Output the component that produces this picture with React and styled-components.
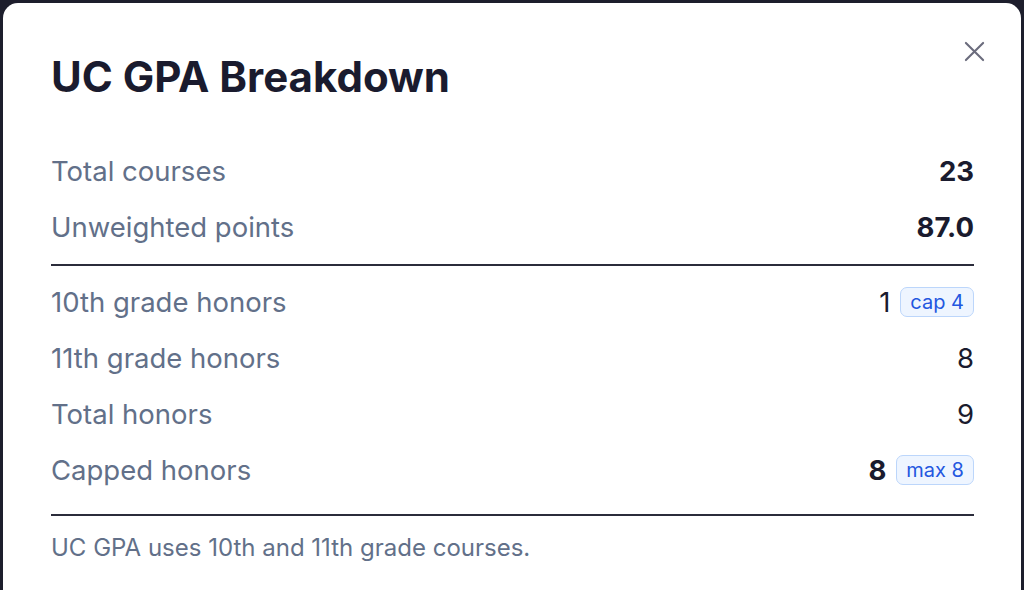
import React from "react";
import styled, { createGlobalStyle } from "styled-components";

const GlobalStyle = createGlobalStyle`
	html, body {
		margin: 0;
		height: 590px;
		overflow: hidden;
		background: #1d1e2c;
		font-family: Inter, "Noto Sans", "Liberation Sans", sans-serif;
	}
`;

const Backdrop = styled.div`
	padding: 3px 3px 0 3px;
	height: 590px;
	box-sizing: border-box;
`;

const Modal = styled.div`
	background: #ffffff;
	border-radius: 15px 15px 0 0;
	height: 620px;
	box-sizing: border-box;
	padding: 52px 47px 0 48px;
	color: #1a1b2e;
`;

const Header = styled.div`
	display: flex;
	justify-content: space-between;
	align-items: flex-start;
	height: 44px;
	margin-bottom: 44px;
`;

const Title = styled.h2`
	margin: 0;
	font-size: 42px;
	line-height: 44px;
	font-weight: 700;
	letter-spacing: 0;
	color: #1a1b2e;
`;

const CloseButton = styled.button`
	border: 0;
	background: transparent;
	padding: 0;
	margin: -22px -18px 0 0;
	width: 36px;
	height: 36px;
	display: flex;
	align-items: center;
	justify-content: center;
	cursor: pointer;
	color: #6b6c7d;
`;

const Row = styled.div`
	display: flex;
	align-items: center;
	justify-content: space-between;
	height: 56px;
`;

const Label = styled.span`
	font-size: 27.5px;
	color: #627089;
`;

const Value = styled.span`
	display: flex;
	align-items: center;
	gap: 10px;
	font-size: 27.5px;
	font-weight: ${props => (props.bold ? 700 : 400)};
	color: #1a1b2e;
`;

const Badge = styled.span`
	display: inline-flex;
	align-items: center;
	height: 30px;
	box-sizing: border-box;
	padding: 0 9px;
	border: 1.5px solid #bcd6fb;
	border-radius: 7px;
	background: #eef5ff;
	color: #2357e0;
	font-size: 20px;
	font-weight: 400;
`;

const Divider = styled.hr`
	border: 0;
	height: 2px;
	background: #2b2c3b;
	margin: ${props => props.spacing || "8px 0"};
`;

const Note = styled.p`
	margin: 0;
	font-size: 24px;
	line-height: 32px;
	color: #627089;
`;

const CloseIcon = () => (
	<svg width="21" height="21" viewBox="0 0 22 22" fill="none">
		<path d="M2 2L20 20M20 2L2 20" stroke="currentColor" strokeWidth="2.2" strokeLinecap="round" />
	</svg>
);

const topRows = [
	{ label: "Total courses", value: "23", bold: true },
	{ label: "Unweighted points", value: "87.0", bold: true },
];

const honorRows = [
	{ label: "10th grade honors", value: "1", badge: "cap 4" },
	{ label: "11th grade honors", value: "8" },
	{ label: "Total honors", value: "9" },
	{ label: "Capped honors", value: "8", bold: true, badge: "max 8" },
];

const StatRow = ({ row }) => (
	<Row>
		<Label>{row.label}</Label>
		<Value bold={row.bold}>
			{row.value}
			{row.badge && <Badge>{row.badge}</Badge>}
		</Value>
	</Row>
);

const App = () => (
	<>
		<GlobalStyle />
		<Backdrop>
			<Modal role="dialog">
				<Header>
					<Title>UC GPA Breakdown</Title>
					<CloseButton aria-label="Close">
						<CloseIcon />
					</CloseButton>
				</Header>
				{topRows.map(row => <StatRow key={row.label} row={row} />)}
				<Divider spacing="9px 0 8px" />
				{honorRows.map(row => <StatRow key={row.label} row={row} />)}
				<Divider spacing="16px 0 16px" />
				<Note>UC GPA uses 10th and 11th grade courses.</Note>
			</Modal>
		</Backdrop>
	</>
);

export default App;
